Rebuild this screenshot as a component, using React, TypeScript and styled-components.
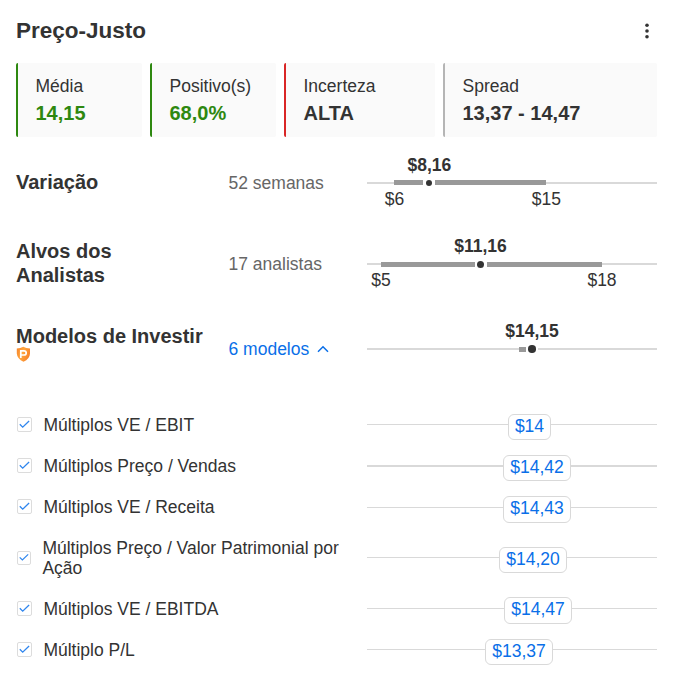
import React from "react";
import styled, { createGlobalStyle } from "styled-components";

const GlobalStyle = createGlobalStyle`
  * { box-sizing: border-box; }
  body {
    margin: 0;
    background: #fff;
    color: #333;
    font-family: "Liberation Sans", Arial, sans-serif;
    font-size: 17.5px;
    line-height: 20px;
  }
`;

const Panel = styled.main`
  width: 675px;
  height: 683px;
  padding: 16px 18px 0 16px;
  overflow: hidden;
`;

const Header = styled.header`
  display: flex;
  justify-content: space-between;
  align-items: center;
  height: 30px;
  margin-bottom: 17px;
`;

const Title = styled.h1`
  margin: 0;
  font-size: 22.5px;
  line-height: 30px;
`;

const MenuButton = styled.button`
  display: flex;
  padding: 0;
  margin-right: 6px;
  border: 0;
  background: none;
`;

const Cards = styled.section`
  display: grid;
  grid-template-columns: 126px 126px 151px 214px;
  gap: 8px;
  height: 74px;
`;

const Card = styled.div<{ $accent: string }>`
  padding: 13px 0 0 17.5px;
  border-left: 2px solid ${(p) => p.$accent};
  border-radius: 2px;
  background: #fafafa;
`;

const CardValue = styled.div<{ $color: string }>`
  margin-top: 5px;
  font-size: 20px;
  line-height: 24px;
  font-weight: 700;
  color: ${(p) => p.$color};
`;

const SummaryRow = styled.section<{ $height: number }>`
  display: grid;
  grid-template-columns: 212.5px 138.5px 290px;
  align-items: center;
  height: ${(p) => p.$height}px;
`;

const Name = styled.h2<{ $badge?: boolean }>`
  margin: 0;
  width: 190px;
  padding-bottom: ${(p) => (p.$badge ? 12 : 2)}px;
  font-size: 20px;
  line-height: 24px;
  white-space: pre-line;
  svg { display: block; margin-top: -2px; }
`;

const Note = styled.span`
  color: #666;
`;

const Toggle = styled.button`
  display: flex;
  align-items: center;
  gap: 8px;
  padding: 0;
  border: 0;
  background: none;
  color: #0a6fe8;
  font: inherit;
`;

const Chart = styled.div`
  display: flex;
  flex-direction: column;
  height: 60px;
  padding-top: 2px;
`;

const ScaleRow = styled.div`
  display: flex;
  height: 20px;
`;

const Bar = styled.div<{ $raised?: boolean }>`
  display: flex;
  height: 5px;
  margin: ${(p) => (p.$raised ? "5px 0 4px" : "6px 0 3px")};
`;

/* A stretch of the price scale; it takes a share of the width. */
const Span = styled.div<{ $share: number }>`
  flex: ${(p) => p.$share} 0 0;
`;

const Rail = styled(Span)<{ $drop: number }>`
  height: 2px;
  margin-top: ${(p) => p.$drop}px;
  background: #d9d9d9;
`;

const Range = styled(Span)`
  background: #999;
`;

const Mark = styled.div<{ $bold?: boolean }>`
  display: flex;
  justify-content: center;
  width: 0;
  white-space: nowrap;
  font-weight: ${(p) => (p.$bold ? 700 : 400)};
`;

const Dot = styled.div<{ $size: number }>`
  display: grid;
  place-content: center;
  flex: 0 0 12px;
  &::after {
    content: "";
    width: ${(p) => p.$size}px;
    height: ${(p) => p.$size}px;
    border-radius: 50%;
    background: #333;
  }
`;

const Models = styled.ul`
  list-style: none;
  margin: 0;
  padding: 6px 0 0;
`;

const ModelRow = styled.li<{ $height: number }>`
  display: grid;
  grid-template-columns: 351px 290px;
  align-items: center;
  height: ${(p) => p.$height}px;
`;

const ModelLabel = styled.label`
  display: flex;
  align-items: center;
  gap: 11.4px;
  padding: 0 20px 0 1px;
`;

const Box = styled.span<{ $small?: boolean }>`
  display: grid;
  place-items: center;
  flex: none;
  width: ${(p) => (p.$small ? 14 : 15)}px;
  height: ${(p) => (p.$small ? 14 : 15)}px;
  border: 1px solid #dcdcdc;
  border-radius: 2px;
  svg { width: ${(p) => (p.$small ? 10 : 11)}px; }
`;

const ModelTrack = styled.div<{ $shift: number }>`
  display: flex;
  padding-top: ${(p) => p.$shift}px;
`;

const Wire = styled(Span)<{ $thick: number; $drop: number }>`
  height: ${(p) => p.$thick}px;
  margin-top: ${(p) => p.$drop}px;
  background: #d9d9d9;
`;

const Pin = styled.span<{ $width: number; $height: number }>`
  flex: none;
  width: ${(p) => p.$width}px;
  height: ${(p) => p.$height}px;
  border: 1px solid #d9d9d9;
  border-radius: 6px;
  color: #0a6fe8;
  text-align: center;
  line-height: 23px;
`;

const cards = [
  { label: "Média", value: "14,15", accent: "#2e8810", color: "#2e8810" },
  { label: "Positivo(s)", value: "68,0%", accent: "#2e8810", color: "#2e8810" },
  { label: "Incerteza", value: "ALTA", accent: "#d92626", color: "#333" },
  { label: "Spread", value: "13,37 - 14,47", accent: "#b5b5b5", color: "#333" },
];

const models = [
  { name: "Múltiplos VE / EBIT", price: "$14", height: 41, before: 141, width: 43, pin: 26, drop: 10, thick: 1, shift: 5 },
  { name: "Múltiplos Preço / Vendas", price: "$14,42", height: 41, before: 136, width: 68, pin: 26, drop: 10, thick: 2, shift: 5 },
  { name: "Múltiplos VE / Receita", price: "$14,43", height: 41, before: 136, width: 68, pin: 27, drop: 11, thick: 1, shift: 6 },
  { name: "Múltiplos Preço / Valor Patrimonial por Ação", price: "$14,20", height: 61, before: 132, width: 68, pin: 26, drop: 10, thick: 1, shift: 5, small: true },
  { name: "Múltiplos VE / EBITDA", price: "$14,47", height: 41, before: 137, width: 68, pin: 27, drop: 11, thick: 1, shift: 4 },
  { name: "Múltiplo P/L", price: "$13,37", height: 41, before: 118, width: 68, pin: 26, drop: 10, thick: 1, shift: 5 },
];

const SCALE = 290;

type PriceChartProps = {
  price: string;
  at: number;
  from: number;
  to: number;
  low?: string;
  high?: string;
  dot: number;
  drop: number;
  raised?: boolean;
};

function PriceChart({ price, at, from, to, low, high, dot, drop, raised }: PriceChartProps) {
  const afterDot = at + 6;
  return (
    <Chart>
      <ScaleRow>
        <Span $share={at} />
        <Mark $bold>{price}</Mark>
        <Span $share={SCALE - at} />
      </ScaleRow>
      <Bar $raised={raised}>
        <Rail $share={from} $drop={drop} />
        <Range $share={at - 6 - from} />
        <Dot $size={dot} />
        {to > afterDot && <Range $share={to - afterDot} />}
        <Rail $share={SCALE - Math.max(to, afterDot)} $drop={drop} />
      </Bar>
      {low && (
        <ScaleRow>
          <Span $share={from} />
          <Mark>{low}</Mark>
          <Span $share={to - from} />
          <Mark>{high}</Mark>
          <Span $share={SCALE - to} />
        </ScaleRow>
      )}
    </Chart>
  );
}

const Check = () => (
  <svg height="9" viewBox="0 0 11 9" fill="none" stroke="#2f86ee" strokeWidth="1.3">
    <path d="M.8 4.3 3.7 7.2 10.1 1" />
  </svg>
);

const ProShield = () => (
  <svg width="15" height="16" viewBox="0 0 15 16">
    <defs>
      <linearGradient id="shield" x1="0" y1="0" x2="1" y2="0.4">
        <stop offset="0" stopColor="#f7842b" />
        <stop offset="0.5" stopColor="#ffa63e" />
        <stop offset="1" stopColor="#f7842b" />
      </linearGradient>
    </defs>
    <path d="M.8 2.4Q4.5 2.3 7.3.8Q10 2.3 14 2.4V7.5Q13.8 13 7.5 15.7Q1.2 13 .8 7.5Z" fill="url(#shield)" />
    <path d="M4.8 12V4.8H7.9Q10.2 4.8 10.2 6.9Q10.2 9 7.9 9H4.8" fill="none" stroke="#fff" strokeWidth="1.7" />
  </svg>
);

export default function App() {
  return (
    <Panel>
      <GlobalStyle />
      <Header>
        <Title>Preço-Justo</Title>
        <MenuButton aria-label="Menu">
          <svg width="8" height="18" viewBox="0 0 8 18" fill="#333">
            <circle cx="4" cy="3.2" r="1.8" />
            <circle cx="4" cy="9" r="1.8" />
            <circle cx="4" cy="14.8" r="1.8" />
          </svg>
        </MenuButton>
      </Header>
      <Cards>
        {cards.map((c) => (
          <Card key={c.label} $accent={c.accent}>
            <div>{c.label}</div>
            <CardValue $color={c.color}>{c.value}</CardValue>
          </Card>
        ))}
      </Cards>
      <SummaryRow $height={92}>
        <Name>Variação</Name>
        <Note>52 semanas</Note>
        <PriceChart price="$8,16" at={62.4} from={27.4} to={179.4} low="$6" high="$15" dot={6} drop={2} raised />
      </SummaryRow>
      <SummaryRow $height={70}>
        <Name>{"Alvos dos\nAnalistas"}</Name>
        <Note>17 analistas</Note>
        <PriceChart price="$11,16" at={113.5} from={14} to={235} low="$5" high="$18" dot={7} drop={1} />
      </SummaryRow>
      <SummaryRow $height={99}>
        <Name $badge>Modelos de Investir<ProShield /></Name>
        <Toggle>
          6 modelos
          <svg width="12" height="8" viewBox="0 0 12 8" fill="none" stroke="#0a6fe8" strokeWidth="1.5">
            <path d="M1 6.8 6 1.8 11 6.8" />
          </svg>
        </Toggle>
        <PriceChart price="$14,15" at={165} from={152} to={160} dot={7.5} drop={1} />
      </SummaryRow>
      <Models>
        {models.map((m) => (
          <ModelRow key={m.name} $height={m.height}>
            <ModelLabel>
              <Box $small={m.small}><Check /></Box>
              <span>{m.name}</span>
            </ModelLabel>
            <ModelTrack $shift={m.shift}>
              <Wire $share={m.before} $thick={m.thick} $drop={m.drop} />
              <Pin $width={m.width} $height={m.pin}>{m.price}</Pin>
              <Wire $share={SCALE - m.before - m.width} $thick={m.thick} $drop={m.drop} />
            </ModelTrack>
          </ModelRow>
        ))}
      </Models>
    </Panel>
  );
}
